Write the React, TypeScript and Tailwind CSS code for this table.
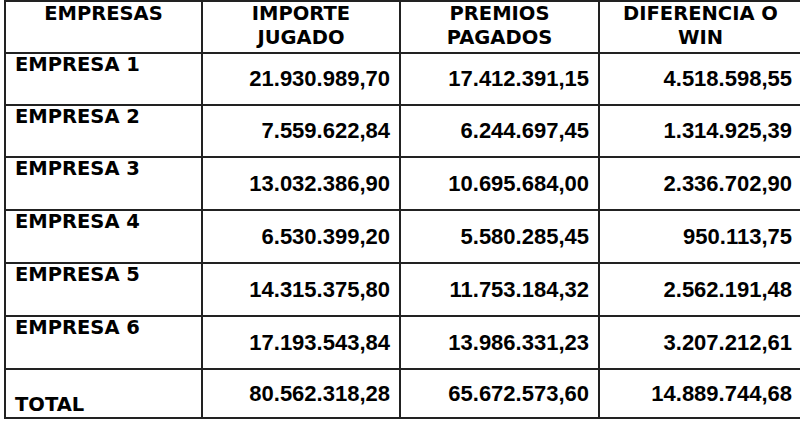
const rows = [
  { name: 'EMPRESA 1', importe: '21.930.989,70', premios: '17.412.391,15', win: '4.518.598,55', h: 'h-[52px]' },
  { name: 'EMPRESA 2', importe: '7.559.622,84', premios: '6.244.697,45', win: '1.314.925,39', h: 'h-[52px]' },
  { name: 'EMPRESA 3', importe: '13.032.386,90', premios: '10.695.684,00', win: '2.336.702,90', h: 'h-[53px]' },
  { name: 'EMPRESA 4', importe: '6.530.399,20', premios: '5.580.285,45', win: '950.113,75', h: 'h-[53px]' },
  { name: 'EMPRESA 5', importe: '14.315.375,80', premios: '11.753.184,32', win: '2.562.191,48', h: 'h-[53px]' },
  { name: 'EMPRESA 6', importe: '17.193.543,84', premios: '13.986.331,23', win: '3.207.212,61', h: 'h-[53px]' },
];

const label = "font-['DejaVu_Sans',Verdana,sans-serif] font-bold text-[19.5px] text-black";
const num = "font-['Liberation_Sans',Arial,sans-serif] font-bold text-[22px] text-black";

function NumCell({ value, w, last }: { value: string; w: string; last?: boolean }) {
  return (
    <div className={`${w} flex items-center justify-end pr-[9px] ${last ? '' : 'border-r-2 border-[#222]'}`}>
      <span className={`${num} leading-[24px]`}>{value}</span>
    </div>
  );
}

export default function App() {
  return (
    <div className="w-[800px] h-[421px] overflow-hidden bg-white">
      <div className="ml-[4px] w-[801px] border-l-2 border-t-2 border-[#222]">
        {/* header */}
        <div className="flex h-[52px] border-b-2 border-[#222]">
          <div className={`w-[197px] border-r-2 border-[#222] text-center leading-[24px] ${label}`}>
            EMPRESAS
          </div>
          <div className={`w-[198px] border-r-2 border-[#222] text-center leading-[24px] ${label}`}>
            IMPORTE
            <br />
            JUGADO
          </div>
          <div className={`w-[199px] border-r-2 border-[#222] text-center leading-[24px] ${label}`}>
            PREMIOS
            <br />
            PAGADOS
          </div>
          <div className={`w-[201px] text-center leading-[24px] ${label}`}>
            DIFERENCIA O
            <br />
            WIN
          </div>
        </div>

        {rows.map((r) => (
          <div key={r.name} className={`flex ${r.h} border-b-2 border-[#222]`}>
            <div className={`w-[197px] border-r-2 border-[#222] pl-[9px] leading-[22px] ${label}`}>
              {r.name}
            </div>
            <NumCell value={r.importe} w="w-[198px]" />
            <NumCell value={r.premios} w="w-[199px]" />
            <NumCell value={r.win} w="w-[201px]" last />
          </div>
        ))}

        {/* total */}
        <div className="flex h-[49px] border-b-2 border-[#222]">
          <div className={`w-[197px] border-r-2 border-[#222] pl-[9px] flex items-end leading-[22px] pb-[1px] ${label}`}>
            TOTAL
          </div>
          <NumCell value="80.562.318,28" w="w-[198px]" />
          <NumCell value="65.672.573,60" w="w-[199px]" />
          <NumCell value="14.889.744,68" w="w-[201px]" last />
        </div>
      </div>
    </div>
  );
}
